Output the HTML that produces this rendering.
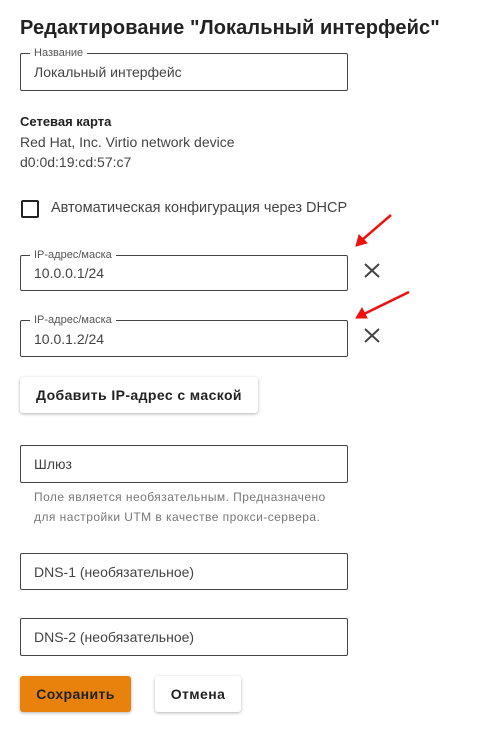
<!DOCTYPE html>
<html><head><meta charset="utf-8"><style>
*{box-sizing:border-box;margin:0;padding:0}
body{width:494px;height:729px;background:#fff;font-family:"Liberation Sans",Arial,sans-serif;color:#333;position:relative;overflow:hidden}
.a{position:absolute}
.f{position:absolute;left:20px;width:328px;border:1px solid #444;border-radius:2px;font-size:14px;color:#444;padding-left:13px;display:flex;align-items:center}
.lbl{position:absolute;top:-8px;left:9px;background:#fff;padding:0 4px;font-size:11px;color:#555;line-height:14px}
.btn{position:absolute;border-radius:3px;box-shadow:0 1px 3px rgba(0,0,0,.3);font-weight:bold;font-size:13px;display:flex;align-items:center;justify-content:center;color:#222;background:#fff}
</style></head><body>
<div class="a" style="left:20px;top:17px;font-size:20px;font-weight:bold;color:#222;letter-spacing:0.1px">Редактирование "Локальный интерфейс"</div>
<div class="f" style="top:53px;height:38px"><span class="lbl">Название</span>Локальный интерфейс</div>
<div class="a" style="left:20px;top:114px;font-size:13px;font-weight:bold;color:#222">Сетевая карта</div>
<div class="a" style="left:20px;top:134px;font-size:14px;color:#444">Red Hat, Inc. Virtio network device</div>
<div class="a" style="left:20px;top:154px;font-size:14px;color:#444">d0:0d:19:cd:57:c7</div>
<div class="a" style="left:21px;top:200px;width:18px;height:18px;border:2px solid #222;border-radius:2px"></div>
<div class="a" style="left:51px;top:200px;font-size:14.5px;color:#444">Автоматическая конфигурация через DHCP</div>
<div class="f" style="top:255px;height:36px"><span class="lbl">IP-адрес/маска</span>10.0.0.1/24</div>
<div class="f" style="top:320px;height:37px"><span class="lbl">IP-адрес/маска</span>10.0.1.2/24</div>
<svg class="a" style="left:0;top:0" width="494" height="729">
<g stroke="#444" stroke-width="2"><path d="M365 264L379 277M379 264L365 277"/><path d="M365 329L379 342M379 329L365 342"/></g>
<g stroke="#f01010" stroke-width="2.5" fill="#f01010"><path d="M391 215L362 240"/><path d="M356 246L359 235L367 243Z" stroke-width="1"/>
<path d="M409 292L364 314"/><path d="M356 318L362 308L367 318Z" stroke-width="1"/></g>
</svg>
<div class="btn" style="left:20px;top:377px;width:238px;height:36px;font-size:14px;letter-spacing:0.4px">Добавить IP-адрес с маской</div>
<div class="f" style="top:445px;height:38px">Шлюз</div>
<div class="a" style="left:34px;top:487px;font-size:12px;color:#777;line-height:20px;letter-spacing:0.45px">Поле является необязательным. Предназначено<br>для настройки UTM в качестве прокси-сервера.</div>
<div class="f" style="top:553px;height:37px">DNS-1 (необязательное)</div>
<div class="f" style="top:618px;height:38px">DNS-2 (необязательное)</div>
<div class="btn" style="left:20px;top:676px;width:111px;height:36px;background:#e8820c;font-size:14px;letter-spacing:0.4px">Сохранить</div>
<div class="btn" style="left:155px;top:676px;width:86px;height:36px;font-size:14px;letter-spacing:0.4px">Отмена</div>
</body></html>
